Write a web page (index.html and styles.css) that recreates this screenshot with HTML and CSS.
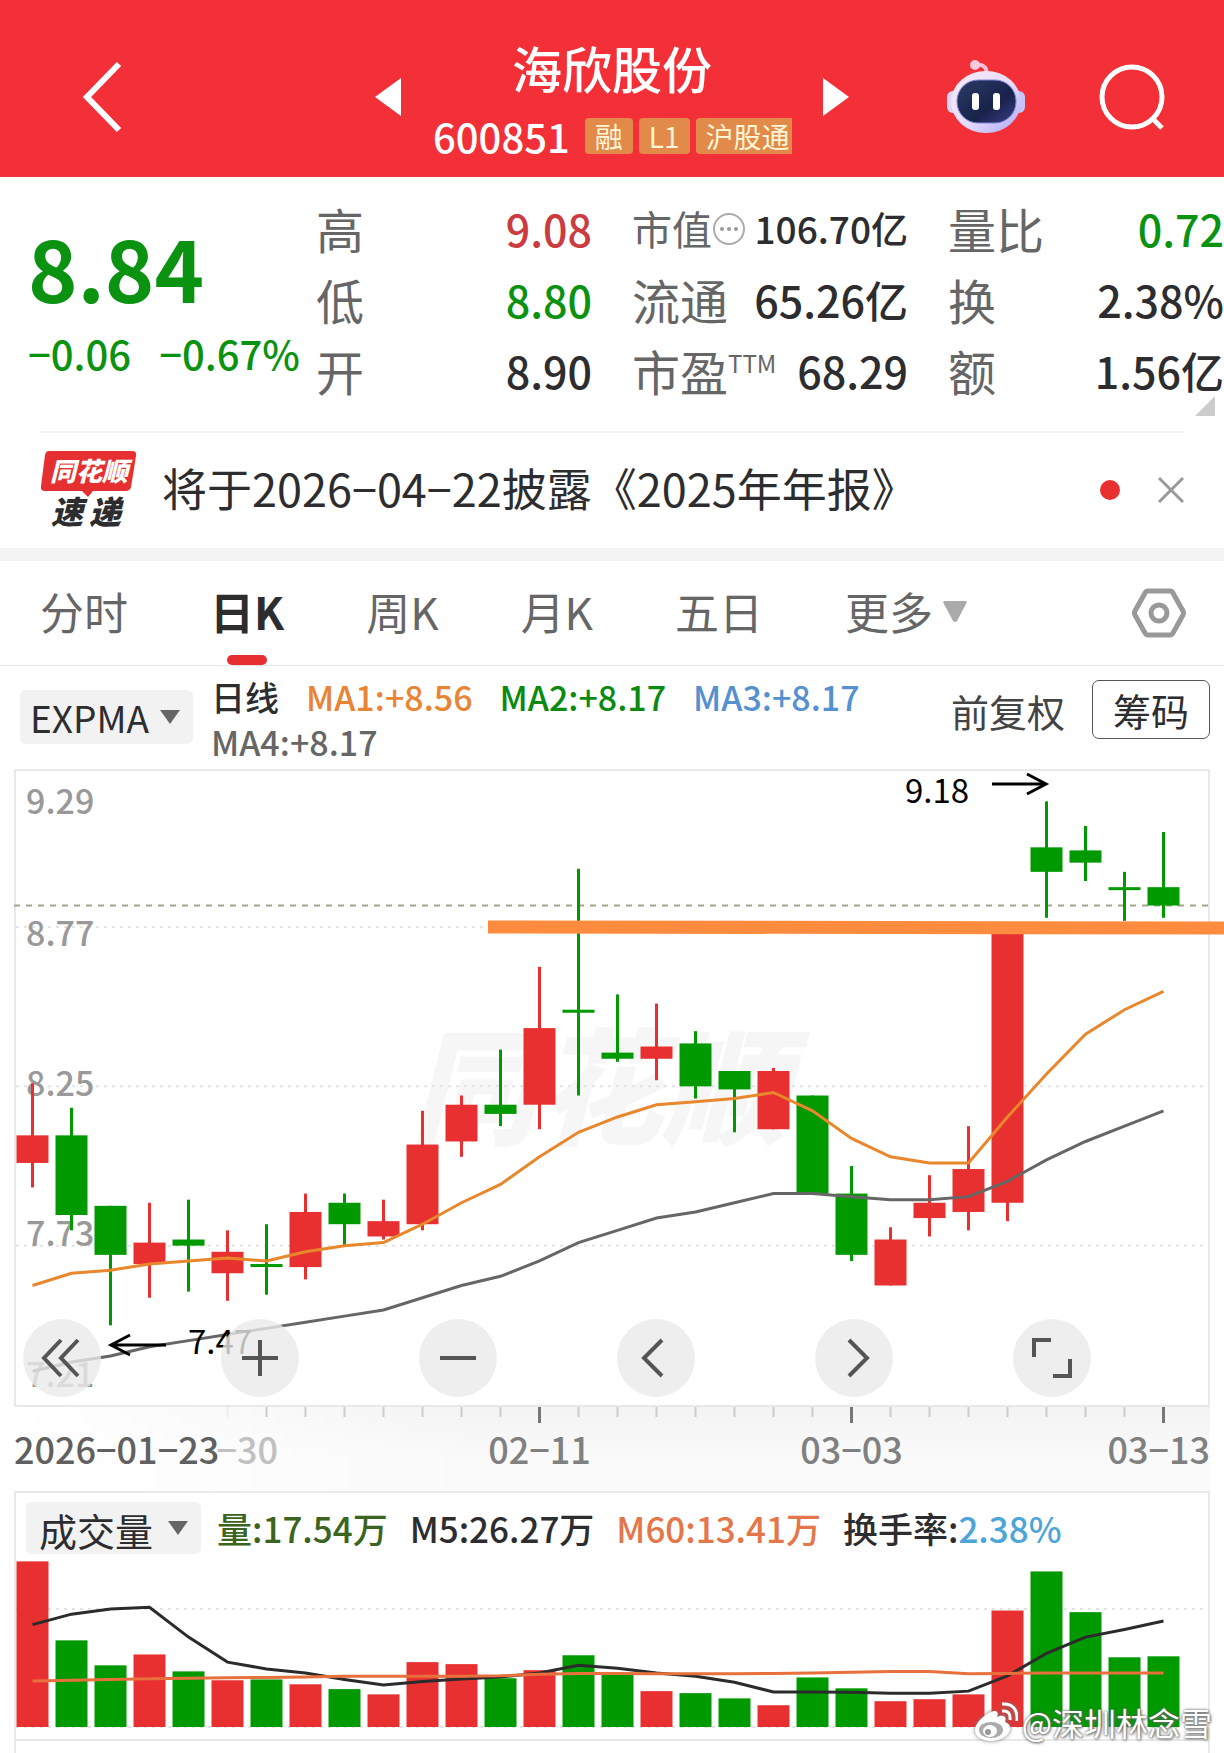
FILE: index.html
```html
<!DOCTYPE html>
<html lang="zh-CN">
<head>
    <meta charset="UTF-8">
    <meta name="viewport" content="width=device-width, initial-scale=1.0">
    <title>海欣股份 600851</title>
    <link rel="stylesheet" href="styles.css">
</head>
<body>
    <header class="topbar">
        <button type="button" class="icon-button back-button" aria-label="返回">
            <svg width="42" height="72" viewBox="0 0 42 72"><path d="M37 3 L5 36 L37 69" fill="none" stroke="#fff" stroke-width="6"/></svg>
        </button>
        <div class="stock-switch">
            <button type="button" class="icon-button" aria-label="上一只">
                <svg width="26" height="38" viewBox="0 0 26 38"><path d="M26 0 L0 19 L26 38 Z" fill="#fff"/></svg>
            </button>
            <div class="stock-title">
                <h1>海欣股份</h1>
                <div class="stock-code">
                    <span class="code">600851</span>
                    <span class="tag">融</span>
                    <span class="tag">L1</span>
                    <span class="tag tag-cut">沪股通</span>
                </div>
            </div>
            <button type="button" class="icon-button" aria-label="下一只">
                <svg width="26" height="38" viewBox="0 0 26 38"><path d="M0 0 L26 19 L0 38 Z" fill="#fff"/></svg>
            </button>
        </div>
        <div class="topbar-actions">
            <button type="button" class="icon-button" aria-label="智能助手">
                <svg width="78" height="76" viewBox="0 0 78 76">
                    <defs>
                        <linearGradient id="robotHead" x1="0" y1="0" x2="1" y2="1">
                            <stop offset="0" stop-color="#fbeaf6"/>
                            <stop offset="0.55" stop-color="#e6dcfb"/>
                            <stop offset="1" stop-color="#a9a6f4"/>
                        </linearGradient>
                        <linearGradient id="robotFace" x1="0" y1="0" x2="1" y2="1">
                            <stop offset="0" stop-color="#2c3c66"/>
                            <stop offset="0.6" stop-color="#18224a"/>
                            <stop offset="1" stop-color="#3b3f86"/>
                        </linearGradient>
                    </defs>
                    <path d="M28 6 Q40 4 40 16" fill="none" stroke="#f9c3d6" stroke-width="4"/>
                    <circle cx="28" cy="6" r="5" fill="#fbc9dc"/>
                    <rect x="0" y="32" width="14" height="22" rx="6" fill="#dcd5fa"/>
                    <rect x="64" y="32" width="14" height="22" rx="6" fill="#c4c6fb"/>
                    <ellipse cx="39" cy="43" rx="35" ry="31" fill="url(#robotHead)"/>
                    <rect x="10" y="21" width="59" height="43" rx="21" fill="url(#robotFace)" stroke="#7c86d8" stroke-width="1"/>
                    <rect x="25" y="34" width="7" height="17" rx="3" fill="#fff"/>
                    <rect x="46" y="34" width="7" height="17" rx="3" fill="#fff"/>
                </svg>
            </button>
            <button type="button" class="icon-button" aria-label="搜索">
                <svg width="66" height="68" viewBox="0 0 66 68"><circle cx="33" cy="34" r="30" fill="none" stroke="#fff" stroke-width="5"/><path d="M52 54 L63 65" stroke="#fff" stroke-width="5"/></svg>
            </button>
        </div>
    </header>

    <section class="quote">
        <div class="quote-price">
            <div class="price down">8.84</div>
            <div class="change down"><span>−0.06</span><span>−0.67%</span></div>
        </div>
        <dl class="quote-column">
            <div><dt>高</dt><dd class="up">9.08</dd></div>
            <div><dt>低</dt><dd class="down">8.80</dd></div>
            <div><dt>开</dt><dd>8.90</dd></div>
        </dl>
        <dl class="quote-column">
            <div class="compact">
                <dt>市值<svg width="34" height="34" viewBox="0 0 34 34"><circle cx="17" cy="17" r="15" fill="none" stroke="#aaa" stroke-width="2"/><circle cx="10" cy="17" r="2" fill="#999"/><circle cx="17" cy="17" r="2" fill="#999"/><circle cx="24" cy="17" r="2" fill="#999"/></svg></dt>
                <dd>106.70亿</dd>
            </div>
            <div><dt>流通</dt><dd>65.26亿</dd></div>
            <div><dt>市盈<sup>TTM</sup></dt><dd>68.29</dd></div>
        </dl>
        <dl class="quote-column">
            <div><dt>量比</dt><dd class="down">0.72</dd></div>
            <div><dt>换</dt><dd>2.38%</dd></div>
            <div><dt>额</dt><dd>1.56亿</dd></div>
        </dl>
        <span class="quote-corner"></span>
    </section>

    <section class="news">
        <svg class="news-logo" width="98" height="80" viewBox="0 0 98 80">
            <path d="M9 1 H92 Q97 1 96 6 L91 37 Q90 41 86 41 H53 L48 47 L42 41 H5 Q0 41 1 36 L5 5 Q6 1 9 1 Z" fill="#e62f31"/>
            <text x="10" y="31" class="logo-top">同花顺</text>
            <text x="11" y="74" class="logo-bottom">速</text>
            <text x="49" y="74" class="logo-bottom">递</text>
        </svg>
        <a href="#" class="news-link">将于2026−04−22披露《2025年年报》</a>
        <span class="news-dot"></span>
        <button type="button" class="icon-button" aria-label="关闭">
            <svg width="26" height="28" viewBox="0 0 26 28"><path d="M1 2 L25 26 M25 2 L1 26" stroke="#999" stroke-width="3"/></svg>
        </button>
    </section>

    <nav class="tabs">
        <button type="button" class="tab">分时</button>
        <button type="button" class="tab active">日K</button>
        <button type="button" class="tab">周K</button>
        <button type="button" class="tab">月K</button>
        <button type="button" class="tab">五日</button>
        <button type="button" class="tab tab-more">更多<svg width="24" height="21" viewBox="0 0 24 21"><path d="M2 0 H22 Q25 0 23 3 L14 20 Q12 22 10 20 L1 3 Q-1 0 2 0 Z" fill="#aaa"/></svg></button>
        <button type="button" class="icon-button settings" aria-label="图表设置">
            <svg width="54" height="50" viewBox="0 0 54 50"><path d="M16 3 H38 Q40 3 41 5 L51 23 Q52 25 51 27 L41 45 Q40 47 38 47 H16 Q14 47 13 45 L3 27 Q2 25 3 23 L13 5 Q14 3 16 3 Z" fill="none" stroke="#999" stroke-width="5"/><circle cx="27" cy="25" r="8" fill="none" stroke="#999" stroke-width="5"/></svg>
        </button>
    </nav>

    <section class="indicators">
        <div class="picker picker-main">
            <select aria-label="主图指标"><option>EXPMA</option></select>
        </div>
        <div class="ma-list">
            <span>日线</span>
            <span class="ma1">MA1:+8.56</span>
            <span class="ma2">MA2:+8.17</span>
            <span class="ma3">MA3:+8.17</span>
            <span class="ma4">MA4:+8.17</span>
        </div>
        <span class="adjust">前复权</span>
        <button type="button" class="chips-button">筹码</button>
    </section>

    <section class="kline">
        <svg id="klineChart" class="chart" viewBox="16 0 1192 634"></svg>
        <div class="chart-tools">
            <button type="button" aria-label="展开"><svg viewBox="0 0 78 78"><path d="M38 21 L21 39 L38 57 M55 21 L38 39 L55 57"/></svg></button>
            <button type="button" aria-label="放大"><svg viewBox="0 0 78 78"><path d="M21 39 H57 M39 21 V57"/></svg></button>
            <button type="button" aria-label="缩小"><svg viewBox="0 0 78 78"><path d="M21 39 H57"/></svg></button>
            <button type="button" aria-label="左移"><svg viewBox="0 0 78 78"><path d="M45 21 L27 39 L45 57"/></svg></button>
            <button type="button" aria-label="右移"><svg viewBox="0 0 78 78"><path d="M34 21 L52 39 L34 57"/></svg></button>
            <button type="button" aria-label="全屏"><svg viewBox="0 0 78 78"><path d="M21 38 V21 H38 M57 40 V57 H40"/></svg></button>
        </div>
    </section>
    <div class="axis">
        <svg id="dateAxis" class="chart" viewBox="14 0 1196 84"></svg>
    </div>

    <section class="volume">
        <div class="volume-header">
            <div class="picker picker-volume">
                <select aria-label="副图指标"><option>成交量</option></select>
            </div>
            <span class="vol-now">量:17.54万</span>
            <span>M5:26.27万</span>
            <span class="vol-m60">M60:13.41万</span>
            <span>换手率:<span class="turnover">2.38%</span></span>
        </div>
        <svg id="volumeChart" class="chart" viewBox="16 0 1192 180"></svg>
    </section>
    <section class="next-panel"></section>

    <div class="watermark">
        <svg width="44" height="40" viewBox="0 0 44 40">
            <path d="M17 10 C23 7 25 11 23 15 C30 12 33 15 31 20 C36 22 37 25 36 28 C34 35 25 39 17 39 C8 39 1 35 1 28 C1 21 10 13 17 10 Z" fill="#fff"/>
            <ellipse cx="17" cy="28" rx="12" ry="8" fill="#aaa"/>
            <ellipse cx="16" cy="29" rx="7" ry="6" fill="#fff"/>
            <circle cx="14" cy="30" r="3" fill="#999"/>
            <path d="M28 9 Q37 8 36 18 M28 2 Q44 1 43 19" fill="none" stroke="#fff" stroke-width="3"/>
        </svg>
        <span>@深圳林念雪</span>
    </div>

    <script>
        const RED = '#e83030';
        const GREEN = '#009900';

        // open, close, high, low
        const candles = [
            [8.00, 8.09, 8.26, 7.92], [8.09, 7.83, 8.18, 7.78], [7.86, 7.70, 7.86, 7.47],
            [7.67, 7.74, 7.87, 7.56], [7.75, 7.73, 7.88, 7.58], [7.64, 7.71, 7.78, 7.55],
            [7.67, 7.67, 7.80, 7.57], [7.66, 7.84, 7.90, 7.62], [7.87, 7.80, 7.90, 7.73],
            [7.76, 7.81, 7.88, 7.75], [7.80, 8.06, 8.17, 7.78], [8.07, 8.19, 8.22, 8.02],
            [8.19, 8.16, 8.37, 8.12], [8.19, 8.44, 8.64, 8.11], [8.50, 8.50, 8.96, 8.22],
            [8.36, 8.34, 8.55, 8.33], [8.34, 8.38, 8.52, 8.27], [8.39, 8.25, 8.43, 8.21],
            [8.30, 8.24, 8.30, 8.10], [8.11, 8.30, 8.31, 8.11], [8.22, 7.90, 8.22, 7.90],
            [7.90, 7.70, 7.99, 7.68], [7.60, 7.75, 7.79, 7.60], [7.82, 7.87, 7.96, 7.76],
            [7.84, 7.98, 8.12, 7.78], [7.87, 8.77, 8.77, 7.81], [9.03, 8.95, 9.18, 8.80],
            [9.02, 8.98, 9.10, 8.92], [8.90, 8.90, 8.95, 8.79], [8.90, 8.84, 9.08, 8.80]
        ];
        const ma1 = [7.60, 7.64, 7.65, 7.67, 7.68, 7.69, 7.68, 7.71, 7.73, 7.74, 7.80, 7.87, 7.93, 8.02, 8.10,
            8.15, 8.19, 8.20, 8.21, 8.23, 8.17, 8.08, 8.02, 8.00, 8.00, 8.15, 8.29, 8.42, 8.50, 8.56];
        const ma4 = [7.32, 7.35, 7.37, 7.40, 7.42, 7.44, 7.46, 7.48, 7.50, 7.52, 7.56, 7.60, 7.63, 7.68, 7.74,
            7.78, 7.82, 7.84, 7.87, 7.90, 7.90, 7.89, 7.88, 7.88, 7.89, 7.94, 8.01, 8.07, 8.12, 8.17];
        const volumes = [41.1, 21.5, 15.3, 18.0, 13.8, 11.6, 11.8, 10.6, 9.4, 8.1, 16.1, 15.6, 12.1, 14.1, 17.8,
            12.9, 8.9, 8.4, 7.1, 5.4, 12.3, 9.6, 6.4, 6.9, 8.1, 28.9, 38.6, 28.5, 17.3, 17.54];
        const vol5 = [25.4, 28.0, 29.3, 29.7, 22.3, 16.1, 14.4, 13.4, 11.8, 10.4, 11.3, 11.9, 12.4, 13.4, 15.3,
            14.6, 13.4, 12.6, 11.1, 8.7, 8.7, 8.6, 8.4, 8.4, 8.9, 12.7, 18.3, 22.3, 24.2, 26.3];
        const vol60 = [11.4, 11.6, 11.8, 12.0, 12.1, 12.2, 12.3, 12.4, 12.6, 12.6, 12.6, 12.6, 12.7, 13.1, 13.3,
            13.3, 13.2, 13.2, 13.2, 13.3, 13.4, 13.6, 13.8, 13.8, 13.2, 13.3, 13.4, 13.4, 13.4, 13.4];

        const x = i => 32.5 + i * 39;
        const priceY = p => 156 + (8.77 - p) * 306.4;
        const volumeY = v => 168 - v * 4.03;

        function add(svg, name, attrs, text) {
            const el = document.createElementNS('http://www.w3.org/2000/svg', name);
            for (const key in attrs) {
                el.setAttribute(key, attrs[key]);
            }
            if (text) {
                el.textContent = text;
            }
            svg.appendChild(el);
        }

        function line(svg, cls, x1, y1, x2, y2) {
            add(svg, 'line', { class: cls, x1: x1, y1: y1, x2: x2, y2: y2 });
        }

        function curve(svg, cls, values, scale) {
            const points = values.map((v, i) => x(i) + ',' + scale(v)).join(' ');
            add(svg, 'polyline', { class: 'curve ' + cls, points: points });
        }

        // Red when the day closed up, green when it closed down
        const color = c => c[1] > c[0] ? RED : GREEN;

        // Price chart
        const kline = document.getElementById('klineChart');
        add(kline, 'text', { class: 'chart-brand', x: 410, y: 364 }, '同花顺');
        [8.77, 8.25, 7.73].forEach(p => line(kline, 'grid', 16, priceY(p), 1208, priceY(p)));
        line(kline, 'last-price', 14, priceY(8.84), 1208, priceY(8.84));
        [['9.29', 43], ['8.77', 175], ['8.25', 325], ['7.73', 475], ['7.21', 616]].forEach(l => {
            add(kline, 'text', { class: 'price-label', x: 26, y: l[1] }, l[0]);
        });
        candles.forEach((c, i) => {
            const top = priceY(Math.max(c[0], c[1]));
            const bottom = priceY(Math.min(c[0], c[1]));
            const height = Math.max(bottom - top, 3);
            add(kline, 'rect', { x: x(i) - 1.5, y: priceY(c[2]), width: 3, height: priceY(c[3]) - priceY(c[2]), fill: color(c) });
            add(kline, 'rect', { x: x(i) - 16, y: top, width: 32, height: height, fill: color(c) });
        });
        curve(kline, 'curve-ma1', ma1, priceY);
        curve(kline, 'curve-ma4', ma4, priceY);
        add(kline, 'path', { class: 'pointer', d: 'M992 13 H1046 M1027 3 L1046 13 L1027 23' });
        add(kline, 'text', { class: 'extreme', x: 905, y: 32 }, '9.18');
        add(kline, 'path', { class: 'pointer', d: 'M166 574 H111 M130 564 L111 574 L130 584' });
        add(kline, 'text', { class: 'extreme', x: 188, y: 583 }, '7.47');
        add(kline, 'path', { class: 'drawn-line', d: 'M488 156 L1224 157' });

        // Date axis
        const axis = document.getElementById('dateAxis');
        for (let i = 5; i < 30; i++) {
            const major = i === 13 || i === 21 || i === 29;
            line(axis, major ? 'tick tick-major' : (i === 5 ? 'tick tick-faded' : 'tick'), x(i), 0, x(i), major ? 16 : 10);
        }
        add(axis, 'text', { class: 'date date-faded', x: 278, y: 57, 'text-anchor': 'end' }, '−30');
        add(axis, 'text', { class: 'date date-start', x: 14, y: 57 }, '2026−01−23');
        add(axis, 'text', { class: 'date', x: x(13), y: 57, 'text-anchor': 'middle' }, '02−11');
        add(axis, 'text', { class: 'date', x: x(21), y: 57, 'text-anchor': 'middle' }, '03−03');
        add(axis, 'text', { class: 'date', x: 1210, y: 57, 'text-anchor': 'end' }, '03−13');

        // Volume chart
        const volume = document.getElementById('volumeChart');
        line(volume, 'grid', 16, 50, 1208, 50);
        line(volume, 'grid', 16, 168, 1208, 168);
        volumes.forEach((v, i) => {
            add(volume, 'rect', { x: x(i) - 16, y: volumeY(v), width: 32, height: 168 - volumeY(v), fill: color(candles[i]) });
        });
        curve(volume, 'curve-vol5', vol5, volumeY);
        curve(volume, 'curve-vol60', vol60, volumeY);
    </script>
</body>
</html>
```

FILE: styles.css
```css
* {
    box-sizing: border-box;
}
body {
    margin: 0;
    position: relative;
    overflow-x: hidden;
    background-color: #fff;
    color: #2d2d2f;
    font-family: "Noto Sans CJK SC", "Noto Sans", sans-serif;
}
button, select {
    font-family: inherit;
    color: inherit;
}
.icon-button {
    display: flex;
    padding: 0;
    border: none;
    background: none;
    cursor: pointer;
}
.up {
    color: #cc3b3f;
}
.down {
    color: #0a9210;
}

/* Top bar */
.topbar {
    display: grid;
    grid-template-columns: 1fr auto 1fr;
    align-items: center;
    height: 177px;
    padding: 16px 59px 0;
    background-color: #f32f38;
    color: #fff;
}
.back-button {
    margin-left: 23px;
}
.stock-switch {
    display: flex;
    align-items: center;
    gap: 32px;
}
.stock-title {
    width: 358px;
}
.stock-title h1 {
    margin: 0 0 12px;
    font-size: 50px;
    font-weight: 500;
    line-height: 66px;
    text-align: center;
}
.stock-code {
    display: flex;
    align-items: center;
    gap: 6px;
    height: 48px;
}
.code {
    margin-right: 9px;
    font-size: 40px;
    font-weight: 500;
    line-height: 48px;
}
.tag {
    flex: none;
    padding: 0 10px;
    border-radius: 4px;
    background-color: #e28a49;
    color: #fff6d8;
    font-size: 28px;
    line-height: 36px;
}
.tag-cut {
    padding-right: 2px;
    border-radius: 4px 0 0 4px;
}
.topbar-actions {
    display: flex;
    align-items: center;
    justify-content: flex-end;
    gap: 74px;
}

/* Quote */
.quote {
    position: relative;
    display: grid;
    grid-template-columns: 248px 1fr 1fr 1fr;
    gap: 40px;
    padding: 16px 0 25px 28px;
}
.quote-price {
    padding-top: 14px;
    white-space: nowrap;
}
.price {
    font-size: 84px;
    font-weight: 700;
    line-height: 120px;
}
.change {
    display: flex;
    gap: 28px;
    font-size: 40px;
    font-weight: 500;
    line-height: 52px;
}
.quote-column {
    margin: 0;
}
.quote-column div {
    display: flex;
    align-items: center;
    justify-content: space-between;
    height: 71px;
    white-space: nowrap;
}
.quote-column dt {
    display: flex;
    align-items: center;
    color: #666;
    font-size: 48px;
    line-height: 71px;
}
.quote-column dd {
    margin: 0;
    font-size: 43px;
    font-weight: 500;
    line-height: 71px;
}
.quote-column .compact dt {
    font-size: 40px;
}
.quote-column .compact dd {
    font-size: 37px;
}
.quote-column sup {
    align-self: flex-start;
    font-size: 24px;
    line-height: 56px;
}
.quote-corner {
    position: absolute;
    right: 9px;
    bottom: 15px;
    border-left: 20px solid transparent;
    border-bottom: 20px solid #ccc;
}

/* News strip */
.news {
    display: flex;
    align-items: center;
    height: 130px;
    padding: 0 40px;
    border-bottom: 13px solid #f3f3f3;
    position: relative;
}
.news::before {
    content: "";
    position: absolute;
    top: 0;
    left: 40px;
    right: 40px;
    height: 2px;
    background-color: #f4f4f4;
}
.logo-top {
    fill: #fff;
    font-size: 26px;
    font-weight: 900;
    font-style: italic;
}
.logo-bottom {
    fill: #2d2d2f;
    font-size: 32px;
    font-weight: 900;
    font-style: italic;
}
.news-link {
    flex: 1;
    margin-left: 24px;
    padding-bottom: 4px;
    color: #2d2d2f;
    font-size: 45px;
    text-decoration: none;
    white-space: nowrap;
}
.news-dot {
    width: 20px;
    height: 20px;
    margin-right: 38px;
    border-radius: 50%;
    background-color: #e83030;
}

/* Period tabs */
.tabs {
    display: flex;
    align-items: stretch;
    gap: 82px;
    height: 105px;
    padding: 0 38px 0 40px;
    border-bottom: 1px solid #e6e6e6;
}
.tab {
    position: relative;
    padding: 0 0 4px;
    border: none;
    background: none;
    color: #666;
    font-size: 44px;
    line-height: 100px;
    white-space: nowrap;
    cursor: pointer;
}
.tab.active {
    color: #2d2d2f;
    font-weight: 700;
}
.tab.active::after {
    content: "";
    position: absolute;
    bottom: 0;
    left: 50%;
    width: 40px;
    height: 10px;
    margin-left: -20px;
    border-radius: 5px;
    background-color: #e62f31;
}
.tab-more {
    display: flex;
    align-items: center;
    gap: 10px;
}
.settings {
    align-items: center;
    margin-left: auto;
}

/* Indicator row */
.indicators {
    display: flex;
    align-items: flex-start;
    height: 103px;
    padding: 0 14px 0 20px;
}
.picker {
    position: relative;
    flex: none;
}
.picker select {
    width: 100%;
    height: 100%;
    border: none;
    border-radius: 6px;
    background-color: #f2f2f2;
    appearance: none;
    cursor: pointer;
}
.picker::after {
    content: "";
    position: absolute;
    top: 50%;
    right: 13px;
    margin-top: -7px;
    border: 10px solid transparent;
    border-top: 14px solid #666;
    border-bottom: none;
    pointer-events: none;
}
.picker-main {
    width: 173px;
    height: 54px;
    margin-top: 24px;
}
.picker-main select {
    padding: 0 0 0 10px;
    font-size: 37px;
}
.ma-list {
    display: flex;
    flex: 1;
    flex-wrap: wrap;
    column-gap: 27px;
    margin: 8px 18px 0;
    font-size: 34px;
    font-weight: 500;
    line-height: 45px;
}
.ma1 {
    color: #e98434;
}
.ma2 {
    color: #0a8a10;
}
.ma3 {
    color: #5590cf;
}
.ma4 {
    color: #666;
}
.adjust {
    margin-right: 27px;
    color: #444;
    font-size: 38px;
    line-height: 90px;
}
.chips-button {
    width: 118px;
    height: 59px;
    margin-top: 14px;
    padding: 0;
    border: 1px solid #555;
    border-radius: 7px;
    background-color: #fff;
    font-size: 38px;
    line-height: 50px;
    cursor: pointer;
}

/* Charts */
.chart {
    display: block;
    width: 100%;
    height: auto;
    overflow: visible;
}
.kline {
    position: relative;
    margin: 0 14px;
    border: 2px solid #e9e9e9;
}
.grid {
    stroke: #e4e4e4;
    stroke-width: 2;
    stroke-dasharray: 3 5;
}
.last-price {
    stroke: #a5a58c;
    stroke-width: 2;
    stroke-dasharray: 6 6;
}
.price-label {
    fill: #999;
    font-size: 34px;
    font-weight: 500;
}
.extreme {
    fill: #000;
    font-size: 33px;
}
.pointer {
    fill: none;
    stroke: #000;
    stroke-width: 3;
}
.chart-brand {
    fill: #f6f6f6;
    font-size: 126px;
    font-weight: 900;
    font-style: italic;
}
.curve {
    fill: none;
    stroke-width: 3;
}
.curve-ma1 {
    stroke: #e8872c;
}
.curve-ma4 {
    stroke: #666;
}
.curve-vol5 {
    stroke: #2b2b2b;
}
.curve-vol60 {
    stroke: #e8703c;
}
.drawn-line {
    stroke: #ff8c3e;
    stroke-width: 13;
}
.chart-tools {
    position: absolute;
    left: 7px;
    bottom: 8px;
    display: flex;
    gap: 120px;
}
.chart-tools button {
    width: 78px;
    height: 78px;
    padding: 0;
    border: none;
    border-radius: 50%;
    background-color: rgba(234, 234, 234, 0.8);
    cursor: pointer;
}
.chart-tools svg {
    display: block;
    fill: none;
    stroke: #555;
    stroke-width: 4;
}
.axis {
    margin: 0 14px;
    background: linear-gradient(90deg, #fff, rgba(255, 255, 255, 0) 40%), linear-gradient(#f3f3f3, #fafafa 60%);
}
.tick {
    stroke: #ccc;
    stroke-width: 2;
}
.tick-major {
    stroke: #777;
    stroke-width: 3;
}
.tick-faded {
    stroke: #eee;
}
.date {
    fill: #808080;
    font-size: 36px;
    font-weight: 500;
}
.date-start {
    fill: #606060;
}
.date-faded {
    fill: #c0c0c0;
}

/* Volume panel */
.volume {
    margin: 0 14px;
    border: 2px solid #e9e9e9;
}
.volume-header {
    display: flex;
    align-items: center;
    gap: 22px;
    height: 66px;
    padding: 4px 10px 0;
    font-size: 35px;
    font-weight: 500;
    line-height: 52px;
    white-space: nowrap;
}
.picker-volume {
    width: 175px;
    height: 52px;
    margin-right: -6px;
}
.picker-volume select {
    padding: 0 0 0 13px;
    font-size: 38px;
}
.vol-now {
    color: #3b6420;
}
.vol-m60 {
    color: #e4774a;
}
.turnover {
    color: #4ba5d8;
}
.next-panel {
    height: 12px;
    margin: 0 14px;
    border: solid #e9e9e9;
    border-width: 0 2px;
}

/* Author mark over the corner of the page */
.watermark {
    position: absolute;
    right: 12px;
    bottom: 9px;
    display: flex;
    align-items: center;
    gap: 4px;
    color: #fff;
    font-size: 32px;
    line-height: 44px;
    text-shadow: 0 0 3px #555, 1px 1px 3px #777;
}
.watermark svg {
    filter: drop-shadow(0 0 2px #777);
}
```
